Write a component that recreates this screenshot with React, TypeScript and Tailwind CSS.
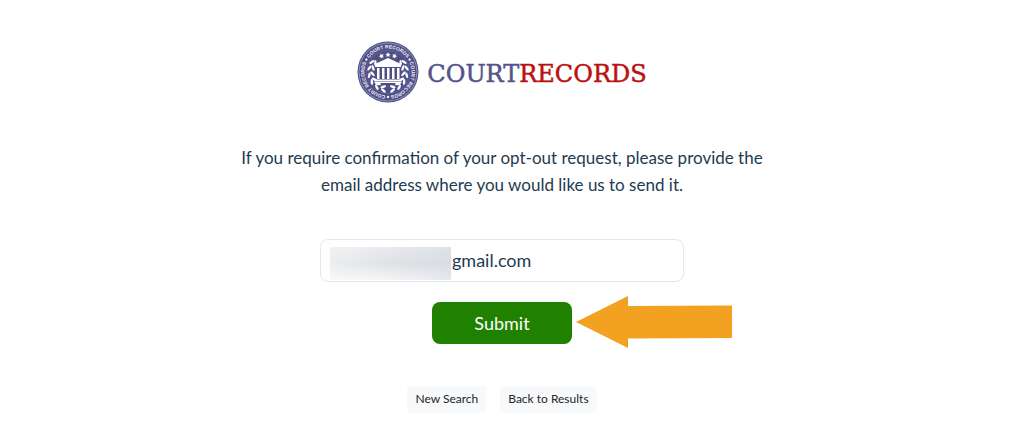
const sealText = "COURT RECORDS";

const leaves = [14, 36, 58, 80, 102, 122];

function Seal() {
  return (
    <svg viewBox="0 0 124 124" className="h-[62px] w-[62px] shrink-0" role="img" aria-label="Court Records seal">
      <defs>
        <path id="ring" d="M62 109A47 47 0 0 1 62 15A47 47 0 0 1 62 109" />
      </defs>
      <circle cx="62" cy="62" r="61" fill="#4f4f87" />
      <circle cx="62" cy="62" r="58" fill="none" stroke="#a5a5c6" strokeWidth="1.500" />
      <circle cx="62" cy="62" r="43" fill="none" stroke="#7474a3" strokeWidth="1" />
      {[0, 120, 240].map((turn) => (
        <g key={turn} transform={`rotate(${turn} 62 62)`}>
          <text fill="#eeeef6" fontFamily="Liberation Sans, sans-serif" fontWeight="700" fontSize="10">
            <textPath href="#ring" startOffset="50%" textAnchor="middle">
              {sealText}
            </textPath>
          </text>
          <circle cx="62" cy="112" r="2.500" fill="#eeeef6" />
        </g>
      ))}
      <g fill="#ffffff">
        <path d="M62 34L88 46V52H36V46Z" />
        <rect x="40" y="54" width="5" height="22" />
        <rect x="50" y="54" width="5" height="22" />
        <rect x="60" y="54" width="5" height="22" />
        <rect x="70" y="54" width="5" height="22" />
        <rect x="80" y="54" width="5" height="22" />
        <rect x="38" y="77" width="48" height="3" />
        <rect x="35" y="81" width="54" height="3" />
        {[-22, 0, 22].map((turn) => (
          <path
            key={turn}
            transform={`rotate(${turn} 62 62)`}
            d="M62 22L63.500 25.500L67 26L64.500 28.500L65 32L62 30L59 32L59.500 28.500L57 26L60.500 25.500Z"
          />
        ))}
        {leaves.map((turn) => (
          <g key={turn}>
            <g transform={`rotate(${turn} 62 62)`}>
              <ellipse cx="62" cy="100" rx="6" ry="2.500" transform="rotate(25 62 100)" />
              <ellipse cx="60" cy="93" rx="6" ry="2.500" transform="rotate(-30 60 93)" />
            </g>
            <g transform={`rotate(${-turn} 62 62)`}>
              <ellipse cx="62" cy="100" rx="6" ry="2.500" transform="rotate(-25 62 100)" />
              <ellipse cx="64" cy="93" rx="6" ry="2.500" transform="rotate(30 64 93)" />
            </g>
          </g>
        ))}
      </g>
    </svg>
  );
}

export default function App() {
  return (
    <main className="flex flex-col items-center bg-white pt-[41px] pr-5 pb-[30px] font-['Lato',sans-serif] text-[#1f3b50]">
      <a href="#" className="flex items-center gap-2" aria-label="CourtRecords">
        <Seal />
        <span className="pt-1 font-['DejaVu_Serif',serif] text-[24px] leading-8 text-[#54548b] [-webkit-text-stroke:thin]">
          COURT<span className="text-[#bb1111]">RECORDS</span>
        </span>
      </a>

      <form className="mt-[41px] flex w-full flex-col items-center" onSubmit={(e) => e.preventDefault()}>
        <label htmlFor="email" className="max-w-[540px] text-center text-[17px] leading-[27px]">
          If you require confirmation of your opt-out request, please provide the email address where you would like us
          to send it.
        </label>

        <div className="relative mt-[41px] w-full max-w-[364px]">
          <input
            id="email"
            type="text"
            defaultValue="gmail.com"
            className="h-[43px] w-full rounded-lg border border-[#e5e7e9] bg-white pr-3 pb-[2px] pl-[131px] text-[18px] outline-none"
          />
          <div className="absolute top-2 left-[10px] h-[33px] w-[121px] bg-linear-to-b from-[#e8eaed] via-[#dfe1e5] to-[#f4f5f7]">
            <div className="h-full w-full bg-linear-to-r from-white/40 via-transparent to-[#cfd5dc]/40" />
          </div>
        </div>

        <div className="relative mt-5">
          <button type="submit" className="h-[42px] w-[140px] rounded-lg bg-[#208100] text-[18px] text-white">
            Submit
          </button>
          <svg
            viewBox="0 0 156 52"
            className="absolute top-[-6px] left-full ml-1 h-[52px] w-[156px]"
            aria-hidden="true"
          >
            <path d="M0 26L52 0V10L156 9.500V42L52 42.500V52Z" fill="#f2a120" />
          </svg>
        </div>
      </form>

      <nav className="mt-[42px] flex gap-[14px] text-[12px] leading-[25px] text-[#212529]">
        <button type="button" className="rounded bg-[#f8f9fa] px-2 pb-[2px]">
          New Search
        </button>
        <button type="button" className="rounded bg-[#f8f9fa] px-2 pb-[2px]">
          Back to Results
        </button>
      </nav>
    </main>
  );
}
